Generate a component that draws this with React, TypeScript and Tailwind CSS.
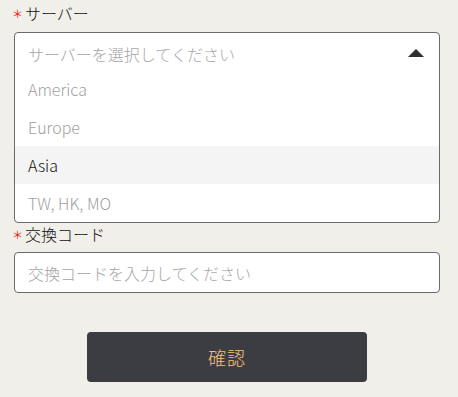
import React from "react";

const font = { fontFamily: '"Noto Sans CJK JP", "Noto Sans", sans-serif' };

function Label({ text, className }: { text: string; className?: string }) {
  return (
    <div className={`flex items-center h-[22px] text-[16px] text-[#111] ${className ?? ""}`}>
      <span className="text-[#e8170b] text-[11px] w-[13px] leading-none -ml-[2px] mt-[1px]">＊</span>
      <span className="leading-[22px] font-light">{text}</span>
    </div>
  );
}

export default function App() {
  const options = [
    { label: "America", active: false },
    { label: "Europe", active: false },
    { label: "Asia", active: true },
    { label: "TW, HK, MO", active: false },
  ];
  return (
    <div className="w-[458px] h-[397px] bg-[#f1efea] pl-[14px] pt-[2px]" style={font}>
      <div className="w-[426px]">
        <Label text="サーバー" className="mb-[8px]" />
        <div className="w-[426px] border border-[#6a6a6a] rounded-[4px] bg-white overflow-hidden">
          <div className="h-[37px] flex items-center justify-between pl-[13px] pr-[15px] pt-[4px]">
            <span className="text-[16px] font-light text-[#a5a5a5]">サーバーを選択してください</span>
            <svg width="16" height="8" viewBox="0 0 16 8" className="mt-[-2px]">
              <polygon points="0,8 8,0 16,8" fill="#2e2e2e" />
            </svg>
          </div>
          {options.map((o) => (
            <div
              key={o.label}
              className={`h-[38px] flex items-center pl-[13px] text-[16px] font-light ${
                o.active ? "bg-[#f4f4f4] text-[#111]" : "text-[#a0a0a0]"
              }`}
            >
              {o.label}
            </div>
          ))}
        </div>
        <Label text="交換コード" className="mb-[7px]" />
        <div className="w-[426px] h-[41px] border border-[#6a6a6a] rounded-[4px] bg-white flex items-center pl-[13px]">
          <span className="text-[16px] font-light text-[#a5a5a5]">交換コードを入力してください</span>
        </div>
        <div className="mt-[39px] mx-auto w-[280px] h-[50px] rounded-[4px] bg-[#3c3d42] flex items-center justify-center">
          <span className="text-[18px] font-light text-[#f7c47a] tracking-[1px]">確認</span>
        </div>
      </div>
    </div>
  );
}
